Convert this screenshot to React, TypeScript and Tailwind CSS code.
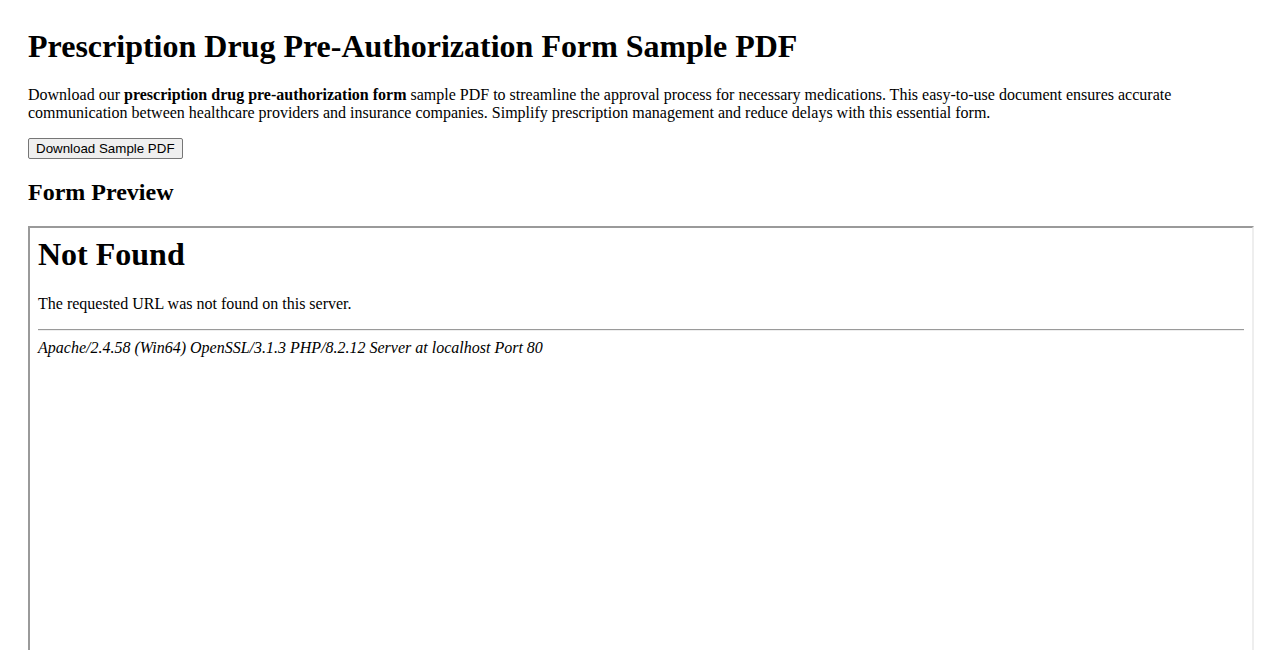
export default function App() {
  return (
    <div className="min-h-screen bg-white px-7 pt-7 font-['Liberation_Serif','Times_New_Roman',serif] leading-[normal] text-black">
      <h1 className="mb-[21.44px] text-[32px] leading-[normal] font-bold">
        Prescription Drug Pre-Authorization Form Sample PDF
      </h1>
      <p className="mb-4 text-[16px] leading-[normal]">
        Download our <strong className="font-bold">prescription drug pre-authorization form</strong>{" "}
        sample PDF to streamline the approval process for necessary medications. This easy-to-use
        document ensures accurate communication between healthcare providers and insurance
        companies. Simplify prescription management and reduce delays with this essential form.
      </p>
      <button
        type="button"
        className="rounded-[2px] border border-[#767676] bg-[#efefef] px-[7px] py-[2px] font-['Liberation_Sans',Arial,sans-serif] text-[13.333px] leading-[normal] text-black"
      >
        Download Sample PDF
      </button>
      <h2 className="mt-[19.92px] mb-[19.92px] text-[24px] leading-[normal] font-bold">Form Preview</h2>

      {/* embedded preview frame showing the server's 404 page */}
      <div className="h-[600px] w-[calc(100%+4px)] border-2 border-t-[#9a9a9a] border-l-[#9a9a9a] border-r-[#eeeeee] border-b-[#eeeeee] bg-white">
        <div className="m-2">
          <h1 className="mb-[21.44px] text-[32px] leading-[normal] font-bold">Not Found</h1>
          <p className="text-[16px] leading-[normal]">The requested URL was not found on this server.</p>
          <hr className="my-4 h-[2px] border-0 border-t border-b border-t-[#9a9a9a] border-b-[#eeeeee]" />
          <address className="-mt-2 text-[16px] leading-[normal] italic">
            Apache/2.4.58 (Win64) OpenSSL/3.1.3 PHP/8.2.12 Server at localhost Port 80
          </address>
        </div>
      </div>
    </div>
  );
}
